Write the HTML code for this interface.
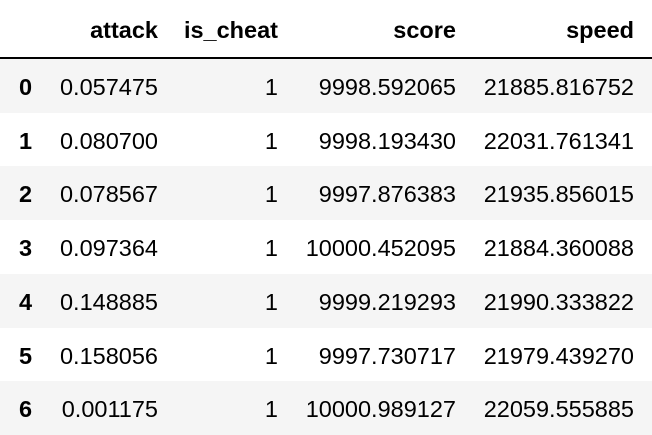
<!DOCTYPE html>
<html><head><style>
body{margin:0;width:652px;height:420px;overflow:hidden;background:#fff;font-family:"Liberation Sans",Arial,sans-serif;font-size:23.5px;color:#000}
.r{position:absolute;left:0;width:652px}
.g{background:#f5f5f5}
.c{position:absolute;line-height:24px;white-space:nowrap}
.b{font-weight:bold}
.hl{position:absolute;left:0;top:57px;width:652px;height:2px;background:#000}
</style></head><body>
<div class="c b" style="right:494px;top:18px">attack</div>
<div class="c b" style="right:374px;top:18px">is_cheat</div>
<div class="c b" style="right:196px;top:18px">score</div>
<div class="c b" style="right:18px;top:18px">speed</div>
<div class="hl"></div>
<div id="rows"></div>
<script>
var d=[["0","0.057475","9998.592065","21885.816752"],["1","0.080700","9998.193430","22031.761341"],["2","0.078567","9997.876383","21935.856015"],["3","0.097364","10000.452095","21884.360088"],["4","0.148885","9999.219293","21990.333822"],["5","0.158056","9997.730717","21979.439270"],["6","0.001175","10000.989127","22059.555885"]];
var h="";
d.forEach(function(r,i){var top=Math.round(59+53.7*i);var t=top+16;
h+='<div class="r'+(i%2==0?' g':'')+'" style="top:'+top+'px;height:'+(Math.round(59+53.7*(i+1))-top)+'px"></div>';
h+='<div class="c b" style="left:19px;top:'+t+'px">'+r[0]+'</div>';
h+='<div class="c" style="right:494px;top:'+t+'px">'+r[1]+'</div>';
h+='<div class="c" style="right:374px;top:'+t+'px">1</div>';
h+='<div class="c" style="right:196px;top:'+t+'px">'+r[2]+'</div>';
h+='<div class="c" style="right:18px;top:'+t+'px">'+r[3]+'</div>';});
document.getElementById("rows").innerHTML=h;
</script>
</body></html>
